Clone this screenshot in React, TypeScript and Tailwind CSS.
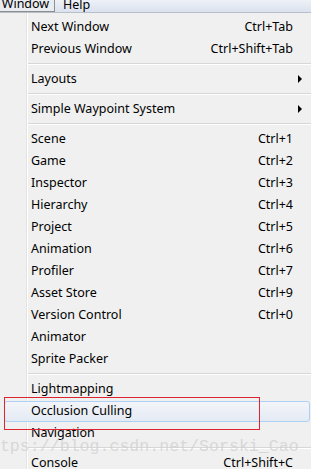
import type { FC } from 'react';

type Item =
  | { kind: 'sep' }
  | { kind: 'item'; label: string; shortcut?: string; sub?: boolean; hot?: boolean };

const items: Item[] = [
  { kind: 'item', label: 'Next Window', shortcut: 'Ctrl+Tab' },
  { kind: 'item', label: 'Previous Window', shortcut: 'Ctrl+Shift+Tab' },
  { kind: 'sep' },
  { kind: 'item', label: 'Layouts', sub: true },
  { kind: 'sep' },
  { kind: 'item', label: 'Simple Waypoint System', sub: true },
  { kind: 'sep' },
  { kind: 'item', label: 'Scene', shortcut: 'Ctrl+1' },
  { kind: 'item', label: 'Game', shortcut: 'Ctrl+2' },
  { kind: 'item', label: 'Inspector', shortcut: 'Ctrl+3' },
  { kind: 'item', label: 'Hierarchy', shortcut: 'Ctrl+4' },
  { kind: 'item', label: 'Project', shortcut: 'Ctrl+5' },
  { kind: 'item', label: 'Animation', shortcut: 'Ctrl+6' },
  { kind: 'item', label: 'Profiler', shortcut: 'Ctrl+7' },
  { kind: 'item', label: 'Asset Store', shortcut: 'Ctrl+9' },
  { kind: 'item', label: 'Version Control', shortcut: 'Ctrl+0' },
  { kind: 'item', label: 'Animator' },
  { kind: 'item', label: 'Sprite Packer' },
  { kind: 'sep' },
  { kind: 'item', label: 'Lightmapping' },
  { kind: 'item', label: 'Occlusion Culling', hot: true },
  { kind: 'item', label: 'Navigation' },
  { kind: 'sep' },
  { kind: 'item', label: 'Console', shortcut: 'Ctrl+Shift+C' }
];

const App: FC = () => {
  return (
    <div className="relative h-[469px] w-[311px] overflow-hidden bg-[#f0f0f0] font-['Noto_Sans',sans-serif] text-[12.5px] text-black">
      {/* menu bar */}
      <div className="flex h-[13px] items-end border-b border-[#b9bfc9] bg-gradient-to-b from-[#eef1f7] to-[#dbe2ee]">
        <div className="-ml-[3px] flex h-[13px] w-[58px] items-end justify-center border-r border-b border-[#8c8e91] bg-[#e9ecf1] leading-[15px]">
          Window
        </div>
        <div className="ml-[8px] leading-[15px]">Help</div>
      </div>

      <div className="flex">
        <div className="w-[26px] shrink-0" />
        <div className="flex-1 border-l border-[#e2e3e3] pt-[3px] shadow-[inset_1px_0_0_#ffffff]">
          {items.map((it, i) =>
            it.kind === 'sep' ? (
              <div key={i} className="flex h-[8px] items-center pl-[1px]">
                <div className="h-[2px] w-full border-t border-b border-t-[#d7d7d7] border-b-white" />
              </div>
            ) : (
              <div key={i} className="relative flex h-[22px] items-center pl-[4px]">
                {it.hot && (
                  <div className="absolute top-[1px] right-[1px] bottom-0 -left-[23px] rounded-[3px] border border-[#aed0f5] bg-gradient-to-b from-[#f3f5f9] to-[#e4eaf4]" />
                )}
                <span className="relative">{it.label}</span>
                <span className="relative ml-auto">{it.shortcut}</span>
                <div className="relative flex w-[18px] shrink-0 items-center pl-[5px]">
                  {it.sub && (
                    <div className="h-0 w-0 border-y-[4px] border-l-[4px] border-y-transparent border-l-black" />
                  )}
                </div>
              </div>
            )
          )}
        </div>
      </div>

      {/* annotation box */}
      <div className="absolute top-[397px] left-[4px] h-[33px] w-[256px] border border-[#dc2430]" />

      {/* watermark */}
      <div className="pointer-events-none absolute top-[435px] -left-[20px] font-['Liberation_Mono',monospace] text-[16.6px] whitespace-nowrap text-[#cfcfcf]/75">
        https://blog.csdn.net/Sorski_Cao
      </div>
    </div>
  );
};

export default App;
